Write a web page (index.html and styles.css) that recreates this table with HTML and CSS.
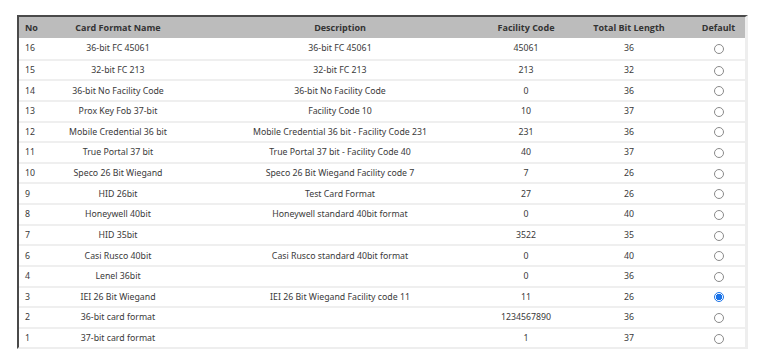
FILE: index.html
```html
<!DOCTYPE html>
<html>
<head>
<meta charset="utf-8">
<link rel="stylesheet" href="styles.css">
</head>
<body>
<div class="frame">
<table class="grid">
<colgroup>
<col class="c-no"><col class="c-name"><col class="c-desc"><col class="c-fc"><col class="c-len"><col class="c-def">
</colgroup>
<thead>
<tr><th class="left">No</th><th>Card Format Name</th><th class="desc">Description</th><th>Facility Code</th><th>Total Bit Length</th><th>Default</th></tr>
</thead>
<tbody>
<tr><td class="left">16</td><td>36-bit FC 45061</td><td class="desc">36-bit FC 45061</td><td>45061</td><td>36</td><td><span class="radio"></span></td></tr>
<tr><td class="left">15</td><td>32-bit FC 213</td><td class="desc">32-bit FC 213</td><td>213</td><td>32</td><td><span class="radio"></span></td></tr>
<tr><td class="left">14</td><td>36-bit No Facility Code</td><td class="desc">36-bit No Facility Code</td><td>0</td><td>36</td><td><span class="radio"></span></td></tr>
<tr><td class="left">13</td><td>Prox Key Fob 37-bit</td><td class="desc">Facility Code 10</td><td>10</td><td>37</td><td><span class="radio"></span></td></tr>
<tr><td class="left">12</td><td>Mobile Credential 36 bit</td><td class="desc">Mobile Credential 36 bit - Facility Code 231</td><td>231</td><td>36</td><td><span class="radio"></span></td></tr>
<tr><td class="left">11</td><td>True Portal 37 bit</td><td class="desc">True Portal 37 bit - Facility Code 40</td><td>40</td><td>37</td><td><span class="radio"></span></td></tr>
<tr><td class="left">10</td><td>Speco 26 Bit Wiegand</td><td class="desc">Speco 26 Bit Wiegand Facility code 7</td><td>7</td><td>26</td><td><span class="radio"></span></td></tr>
<tr><td class="left">9</td><td>HID 26bit</td><td class="desc">Test Card Format</td><td>27</td><td>26</td><td><span class="radio"></span></td></tr>
<tr><td class="left">8</td><td>Honeywell 40bit</td><td class="desc">Honeywell standard 40bit format</td><td>0</td><td>40</td><td><span class="radio"></span></td></tr>
<tr><td class="left">7</td><td>HID 35bit</td><td class="desc"></td><td>3522</td><td>35</td><td><span class="radio"></span></td></tr>
<tr><td class="left">6</td><td>Casi Rusco 40bit</td><td class="desc">Casi Rusco standard 40bit format</td><td>0</td><td>40</td><td><span class="radio"></span></td></tr>
<tr><td class="left">4</td><td>Lenel 36bit</td><td class="desc"></td><td>0</td><td>36</td><td><span class="radio"></span></td></tr>
<tr><td class="left">3</td><td>IEI 26 Bit Wiegand</td><td class="desc">IEI 26 Bit Wiegand Facility code 11</td><td>11</td><td>26</td><td><span class="radio on"></span></td></tr>
<tr><td class="left">2</td><td>36-bit card format</td><td class="desc"></td><td>1234567890</td><td>36</td><td><span class="radio"></span></td></tr>
<tr><td class="left">1</td><td>37-bit card format</td><td class="desc"></td><td>1</td><td>37</td><td><span class="radio"></span></td></tr>
</tbody>
</table>
</div>
</body>
</html>
```
FILE: styles.css
```css
html, body {
  margin: 0;
  padding: 0;
  background: #fff;
}
body {
  padding: 15px 9px 0 17px;
  font-family: "Noto Sans", "Open Sans", sans-serif;
  font-size: 8.75px;
  color: #3a3a3a;
}
.frame {
  width: 726px;
  border-top: 2px solid #4a4a4a;
  border-left: 2px solid #4a4a4a;
  border-right: 3px solid #eeeeee;
  border-bottom: 2px solid #eeeeee;
}
.grid {
  width: 100%;
  border-collapse: separate;
  border-spacing: 0;
  table-layout: fixed;
}
.c-no { width: 41px; }
.c-name { width: 116px; }
.c-desc { width: 310px; }
.c-fc { width: 80px; }
.c-len { width: 126px; }
.c-def { width: 53px; }
th {
  background: #bcbcbc;
  height: 21px;
  padding: 0;
  font-family: "Open Sans", "Noto Sans", sans-serif;
  font-size: 9px;
  font-weight: 700;
  text-align: center;
  color: #333;
}
td {
  height: 18.64px;
  padding: 0;
  text-align: center;
  border-top: 2px solid #efefef;
}
tbody tr:first-child td {
  border-top: 0;
  height: 20.64px;
}
th.left, td.left {
  text-align: left;
  padding-left: 6px;
}
th.desc, td.desc {
  padding-left: 18px;
}
.radio {
  display: inline-block;
  width: 8px;
  height: 8px;
  border: 1px solid #8a8a8a;
  border-radius: 50%;
  vertical-align: middle;
  box-sizing: content-box;
}
.radio.on {
  border-color: #1a73e8;
  background: radial-gradient(circle, #1a73e8 0 3px, #fff 3.5px);
}
```
